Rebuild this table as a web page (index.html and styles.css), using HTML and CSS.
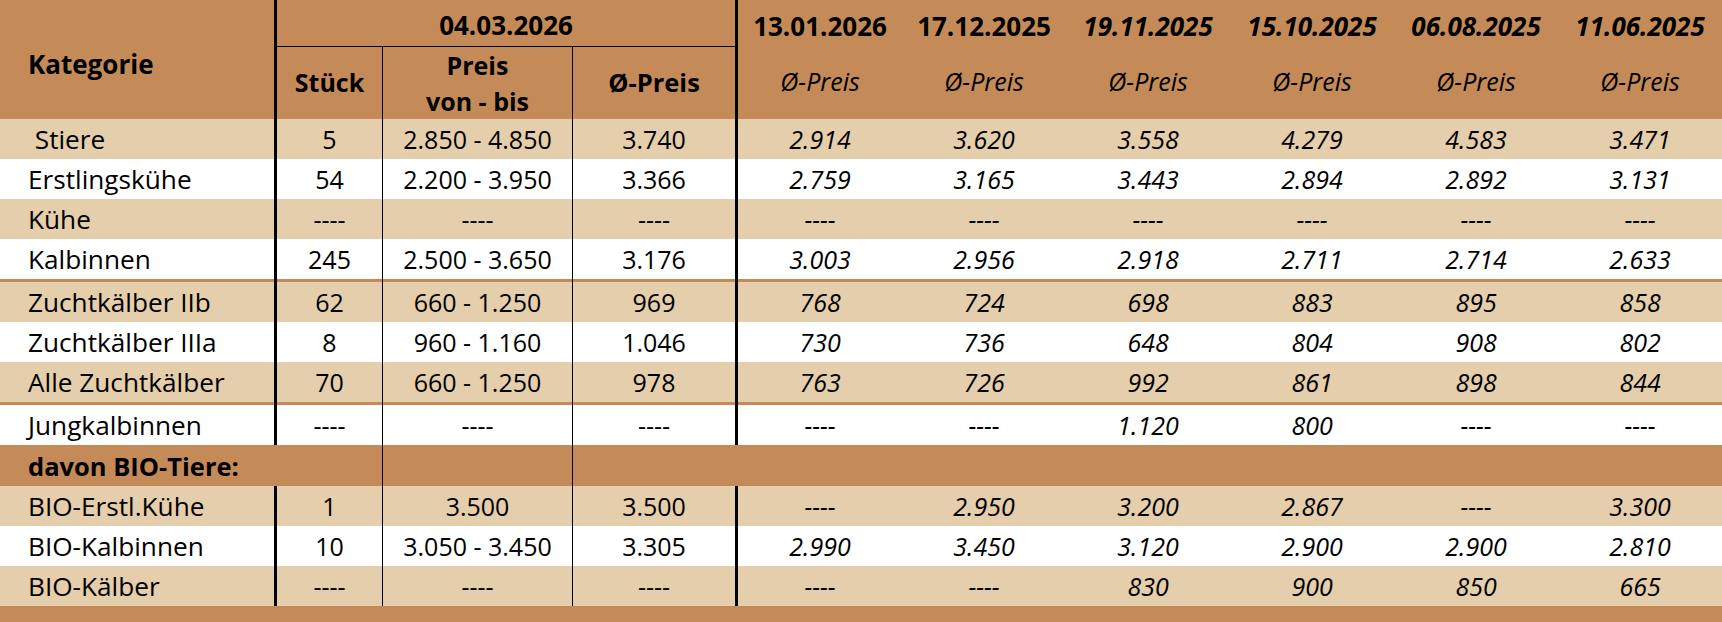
FILE: index.html
```html
<!DOCTYPE html>
<html lang="de">
<head>
<meta charset="utf-8">
<title>Marktpreise Zuchtrinder</title>
<link rel="stylesheet" href="styles.css">
</head>
<body>
<table class="prices">
  <colgroup>
    <col class="c-kat">
    <col class="c-st">
    <col class="c-pr">
    <col class="c-avg">
    <col class="c-hist" span="6">
  </colgroup>
  <thead>
    <tr class="h1">
      <th rowspan="2" class="kat-head thick">Kategorie</th>
      <th colspan="3" class="cur-date thick">04.03.2026</th>
      <th class="date">13.01.2026</th>
      <th class="date">17.12.2025</th>
      <th class="date it">19.11.2025</th>
      <th class="date it">15.10.2025</th>
      <th class="date it">06.08.2025</th>
      <th class="date it">11.06.2025</th>
    </tr>
    <tr class="h2">
      <th class="thin">Stück</th>
      <th class="thin range-head">Preis<br>von - bis</th>
      <th class="thick avg-head">Ø-Preis</th>
      <th class="sub">Ø-Preis</th>
      <th class="sub">Ø-Preis</th>
      <th class="sub">Ø-Preis</th>
      <th class="sub">Ø-Preis</th>
      <th class="sub">Ø-Preis</th>
      <th class="sub">Ø-Preis</th>
    </tr>
  </thead>
  <tbody>
    <tr class="tan">
      <td class="kat thick">&nbsp;Stiere</td><td class="thin">5</td><td class="thin">2.850 - 4.850</td><td class="thick">3.740</td>
      <td class="hist">2.914</td><td class="hist">3.620</td><td class="hist">3.558</td><td class="hist">4.279</td><td class="hist">4.583</td><td class="hist">3.471</td>
    </tr>
    <tr class="white">
      <td class="kat thick">Erstlingskühe</td><td class="thin">54</td><td class="thin">2.200 - 3.950</td><td class="thick">3.366</td>
      <td class="hist">2.759</td><td class="hist">3.165</td><td class="hist">3.443</td><td class="hist">2.894</td><td class="hist">2.892</td><td class="hist">3.131</td>
    </tr>
    <tr class="tan">
      <td class="kat thick">Kühe</td><td class="thin">----</td><td class="thin">----</td><td class="thick">----</td>
      <td class="hist">----</td><td class="hist">----</td><td class="hist">----</td><td class="hist">----</td><td class="hist">----</td><td class="hist">----</td>
    </tr>
    <tr class="white">
      <td class="kat thick">Kalbinnen</td><td class="thin">245</td><td class="thin">2.500 - 3.650</td><td class="thick">3.176</td>
      <td class="hist">3.003</td><td class="hist">2.956</td><td class="hist">2.918</td><td class="hist">2.711</td><td class="hist">2.714</td><td class="hist">2.633</td>
    </tr>
    <tr class="tan sep">
      <td class="kat thick">Zuchtkälber IIb</td><td class="thin">62</td><td class="thin">660 - 1.250</td><td class="thick">969</td>
      <td class="hist">768</td><td class="hist">724</td><td class="hist">698</td><td class="hist">883</td><td class="hist">895</td><td class="hist">858</td>
    </tr>
    <tr class="white">
      <td class="kat thick">Zuchtkälber IIIa</td><td class="thin">8</td><td class="thin">960 - 1.160</td><td class="thick">1.046</td>
      <td class="hist">730</td><td class="hist">736</td><td class="hist">648</td><td class="hist">804</td><td class="hist">908</td><td class="hist">802</td>
    </tr>
    <tr class="tan">
      <td class="kat thick">Alle Zuchtkälber</td><td class="thin">70</td><td class="thin">660 - 1.250</td><td class="thick">978</td>
      <td class="hist">763</td><td class="hist">726</td><td class="hist">992</td><td class="hist">861</td><td class="hist">898</td><td class="hist">844</td>
    </tr>
    <tr class="white sep">
      <td class="kat thick">Jungkalbinnen</td><td class="thin">----</td><td class="thin">----</td><td class="thick">----</td>
      <td class="hist">----</td><td class="hist">----</td><td class="hist">1.120</td><td class="hist">800</td><td class="hist">----</td><td class="hist">----</td>
    </tr>
    <tr class="group">
      <td class="kat group-title">davon BIO-Tiere:</td><td class="thin"></td><td class="thin"></td><td></td>
      <td></td><td></td><td></td><td></td><td></td><td></td>
    </tr>
    <tr class="tan">
      <td class="kat thick">BIO-Erstl.Kühe</td><td class="thin">1</td><td class="thin">3.500</td><td class="thick">3.500</td>
      <td class="hist">----</td><td class="hist">2.950</td><td class="hist">3.200</td><td class="hist">2.867</td><td class="hist">----</td><td class="hist">3.300</td>
    </tr>
    <tr class="white">
      <td class="kat thick">BIO-Kalbinnen</td><td class="thin">10</td><td class="thin">3.050 - 3.450</td><td class="thick">3.305</td>
      <td class="hist">2.990</td><td class="hist">3.450</td><td class="hist">3.120</td><td class="hist">2.900</td><td class="hist">2.900</td><td class="hist">2.810</td>
    </tr>
    <tr class="tan">
      <td class="kat thick">BIO-Kälber</td><td class="thin">----</td><td class="thin">----</td><td class="thick">----</td>
      <td class="hist">----</td><td class="hist">----</td><td class="hist">830</td><td class="hist">900</td><td class="hist">850</td><td class="hist">665</td>
    </tr>
    <tr class="foot">
      <td colspan="10"></td>
    </tr>
  </tbody>
</table>
</body>
</html>
```

FILE: styles.css
```css
html, body {
  margin: 0;
  padding: 0;
  background: #ffffff;
}

body {
  font-family: "Open Sans", "Noto Sans", "DejaVu Sans", sans-serif;
  color: #000000;
}

.prices {
  border-collapse: separate;
  border-spacing: 0;
  table-layout: fixed;
  width: 1722px;
  font-size: 25px;
}

.c-kat { width: 277px; }
.c-st { width: 106px; }
.c-pr { width: 190px; }
.c-avg { width: 165px; }
.c-hist { width: 164px; }

.prices th,
.prices td {
  box-sizing: border-box;
  padding: 0;
  text-align: center;
  vertical-align: middle;
  white-space: nowrap;
  line-height: 32px;
}

.prices thead th {
  background: #c48b58;
  font-weight: 700;
}

.prices .h1 th {
  height: 47px;
  padding-top: 4px;
  font-size: 26px;
}

.prices .h2 th {
  height: 71px;
  padding-bottom: 2px;
}

.prices thead .kat-head {
  text-align: left;
  padding-left: 28px;
  padding-top: 8px;
  font-size: 26px;
}

.prices .cur-date {
  border-bottom: 1px solid #000000;
}

.prices .date.it {
  font-style: italic;
}

.prices .h2 .range-head {
  line-height: 36px;
  padding-bottom: 0;
}

.prices .h2 .avg-head {
  font-size: 25.5px;
}

.prices thead .sub {
  font-weight: 400;
  font-style: italic;
  padding-bottom: 4px;
}

.thick {
  border-right: 3px solid #000000;
}

.thin {
  border-right: 1px solid #000000;
}

.prices tbody td {
  height: 40px;
}

.prices td.kat {
  text-align: left;
  padding-left: 28px;
  font-size: 26.2px;
}

.hist {
  font-style: italic;
}

.tan td {
  background: #e5ceab;
}

.white td {
  background: #ffffff;
}

.prices tr.sep td {
  height: 43px;
  padding-top: 3px;
  box-shadow: inset 0 3px 0 #c48b58;
}

.prices tr.group td {
  background: #c48b58;
  height: 41px;
}

.prices td.group-title {
  font-weight: 700;
  font-size: 25.5px;
}

.prices tr.foot td {
  background: #c48b58;
  height: 20px;
}
```
